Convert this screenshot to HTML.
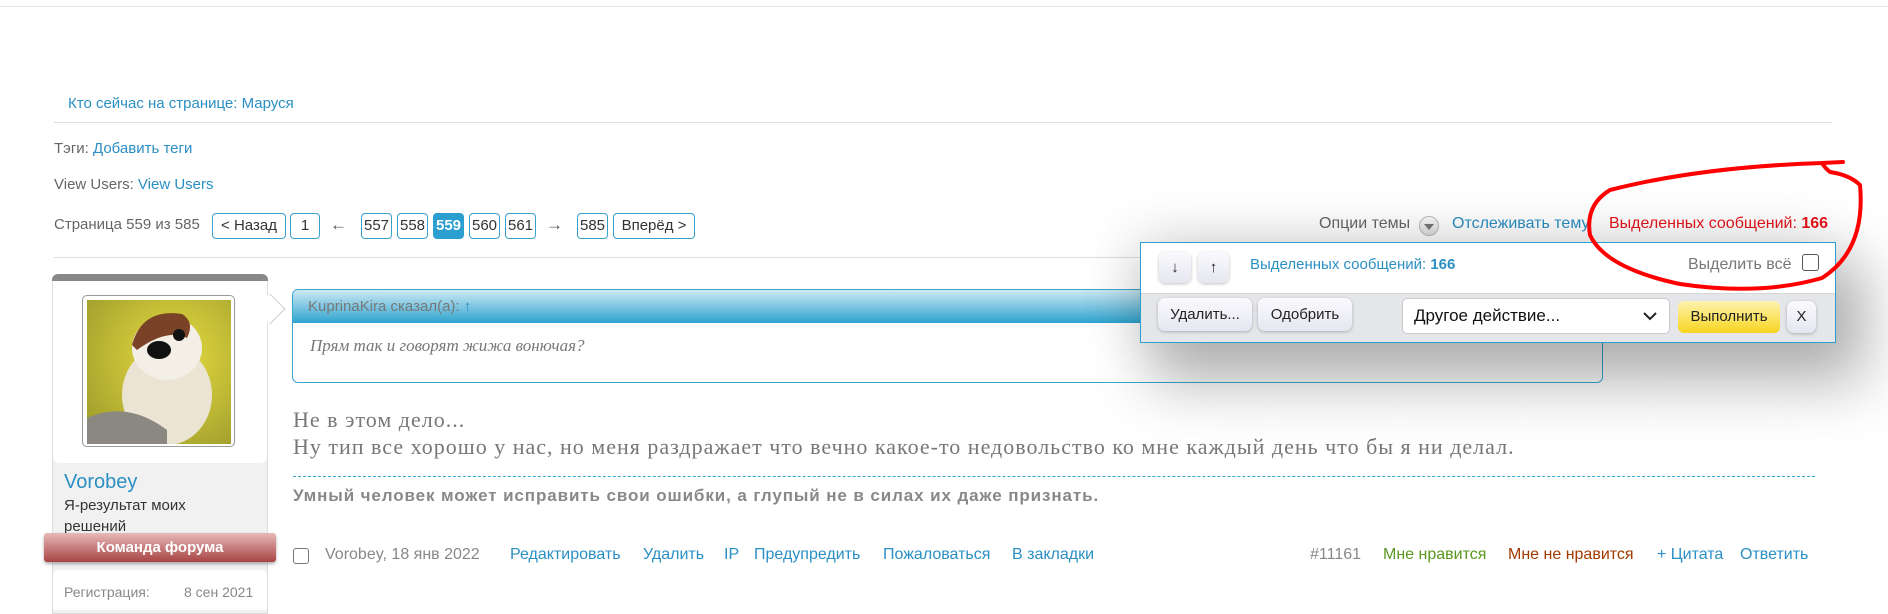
<!DOCTYPE html>
<html><head><meta charset="utf-8"><style>
*{margin:0;padding:0;box-sizing:border-box}
body{width:1888px;height:607px;overflow:hidden;background:#fff;font-family:"Liberation Sans","DejaVu Sans",sans-serif;font-size:15px;color:#666;position:relative}
.a{position:absolute;white-space:nowrap}
.b{color:#2a8fc3}
.hr{position:absolute;height:1px;background:#ddd}
.pb{position:absolute;top:213px;height:26px;border:1px solid #3a9fcc;border-radius:4px;background:#fff;color:#333;font-size:15px;line-height:24px;text-align:center}
.btn{position:absolute;border-radius:7px;background:linear-gradient(#fafafe,#e6e6f0);box-shadow:0 1px 3px rgba(0,0,0,.25);color:#222;text-align:center;font-size:15px}
.f{font-size:16px;top:546px}
</style></head><body>
<div class="hr" style="left:0;top:6px;width:1888px;background:#e2e2e2"></div>
<div class="a b" style="left:68px;top:95px">Кто сейчас на странице: Маруся</div>
<div class="hr" style="left:54px;top:122px;width:1778px"></div>
<div class="a" style="left:54px;top:140px">Тэги: <span class="b">Добавить теги</span></div>
<div class="a" style="left:54px;top:176px">View Users: <span class="b">View Users</span></div>
<div class="a" style="left:54px;top:216px">Страница 559 из 585</div>
<div class="pb" style="left:212px;width:74px">&lt; Назад</div>
<div class="pb" style="left:290px;width:30px">1</div>
<div class="a" style="left:330px;top:215px;color:#555;font-size:17px">←</div>
<div class="pb" style="left:361px;width:31px">557</div>
<div class="pb" style="left:397px;width:31px">558</div>
<div class="pb" style="left:433px;width:31px;background:#2a9fd0;border-color:#2a9fd0;color:#fff;font-weight:bold">559</div>
<div class="pb" style="left:469px;width:31px">560</div>
<div class="pb" style="left:505px;width:31px">561</div>
<div class="a" style="left:546px;top:215px;color:#555;font-size:17px">→</div>
<div class="pb" style="left:577px;width:31px">585</div>
<div class="pb" style="left:613px;width:82px">Вперёд &gt;</div>
<div class="a" style="left:1319px;top:215px;color:#666;font-size:16px">Опции темы</div>
<div class="a" style="left:1419px;top:216px;width:20px;height:20px;border-radius:50%;border:1px solid #bbb;background:linear-gradient(#fafafa,#ddd)"><div style="position:absolute;left:4px;top:7px;border-left:5px solid transparent;border-right:5px solid transparent;border-top:6px solid #777"></div></div>
<div class="a b" style="left:1452px;top:215px;font-size:16px">Отслеживать тему</div>
<div class="a" style="left:1609px;top:215px;color:#e8141a;font-size:16px">Выделенных сообщений: <b>166</b></div>
<div class="hr" style="left:54px;top:257px;width:1778px"></div>

<!-- postbit -->
<div class="a" style="left:52px;top:274px;width:216px;height:340px;border:1px solid #ddd;border-top:0;background:#f1f1f1;border-radius:6px 6px 0 0"></div>
<div class="a" style="left:52px;top:274px;width:216px;height:7px;background:#888;border-radius:6px 6px 0 0"></div>
<div class="a" style="left:53px;top:281px;width:214px;height:182px;background:#fff;border-radius:0 0 6px 6px"></div>
<div class="a" style="left:259px;top:298px;width:22px;height:22px;background:#fff;border-right:1px solid #ccc;border-top:1px solid #ccc;transform:rotate(45deg)"></div>
<div class="a" style="left:82px;top:295px;width:153px;height:152px;border:1px solid #999;border-radius:5px;background:#fff"></div>
<svg class="a" style="left:87px;top:300px" width="144" height="144" viewBox="0 0 144 144">
<defs><radialGradient id="g" cx="0.6" cy="0.4" r="0.8"><stop offset="0" stop-color="#e8dd40"/><stop offset="1" stop-color="#9c9a2c"/></radialGradient></defs>
<rect width="144" height="144" fill="url(#g)"/>
<ellipse cx="80" cy="95" rx="45" ry="50" fill="#ece4d2"/>
<ellipse cx="80" cy="48" rx="35" ry="32" fill="#f3efe6"/>
<path d="M45 45 Q55 8 95 14 Q108 22 100 38 Q80 28 50 50Z" fill="#7a4226"/>
<ellipse cx="72" cy="50" rx="12" ry="9" fill="#111"/>
<circle cx="92" cy="35" r="6" fill="#111"/>
<path d="M0 118 Q40 100 80 130 L80 144 L0 144Z" fill="#8a8880"/>
</svg>
<div class="a b" style="left:64px;top:471px;font-size:20px">Vorobey</div>
<div class="a" style="left:64px;top:495px;color:#333;font-size:15px;line-height:21px;white-space:normal;width:190px">Я-результат моих<br>решений</div>
<div class="a" style="left:44px;top:533px;width:232px;height:29px;border-radius:3px;background:linear-gradient(#e7b9b9,#a84444);box-shadow:0 2px 3px rgba(0,0,0,.3);color:#fff;font-weight:bold;text-align:center;line-height:29px;font-size:15px">Команда форума</div>
<div class="a" style="left:53px;top:570px;width:214px;height:40px;background:#fff;border-radius:5px 5px 0 0"></div>
<div class="a" style="left:64px;top:584px;font-size:14px;color:#888">Регистрация:</div>
<div class="a" style="left:184px;top:584px;font-size:14px;color:#888">8 сен 2021</div>

<!-- quote -->
<div class="a" style="left:292px;top:289px;width:1311px;height:94px;border:1px solid #3aa6d0;border-radius:6px;overflow:hidden">
<div style="height:33px;background:linear-gradient(#cde9f3,#2ea3cf);color:#777;padding:8px 0 0 15px;font-size:15px">KuprinaKira сказал(а): <span class="b">↑</span></div>
<div style="padding:13px 0 0 17px;font-family:'Liberation Serif',serif;font-style:italic;color:#777;font-size:17px">Прям так и говорят жижа вонючая?</div>
</div>
<div class="a" style="left:293px;top:406px;font-family:'Liberation Serif',serif;font-size:22px;letter-spacing:1px;color:#777;line-height:27px">Не в этом дело...<br>Ну тип все хорошо у нас, но меня раздражает что вечно какое-то недовольство ко мне каждый день что бы я ни делал.</div>
<div class="a" style="left:293px;top:476px;width:1522px;border-top:1px dashed #3aa6d0"></div>
<div class="a" style="left:293px;top:486px;font-weight:bold;color:#888;font-size:17px;letter-spacing:0.9px">Умный человек может исправить свои ошибки, а глупый не в силах их даже признать.</div>
<div class="a" style="left:293px;top:548px;width:16px;height:16px;border:1px solid #777;border-radius:3px"></div>
<div class="a f" style="left:325px;color:#888">Vorobey, 18 янв 2022</div>
<div class="a b f" style="left:510px">Редактировать</div>
<div class="a b f" style="left:643px">Удалить</div>
<div class="a b f" style="left:724px">IP</div>
<div class="a b f" style="left:754px">Предупредить</div>
<div class="a b f" style="left:883px">Пожаловаться</div>
<div class="a b f" style="left:1012px">В закладки</div>
<div class="a f" style="left:1310px;color:#888">#11161</div>
<div class="a f" style="left:1383px;color:#5a9620">Мне нравится</div>
<div class="a f" style="left:1508px;color:#a03a00">Мне не нравится</div>
<div class="a b f" style="left:1657px">+ Цитата</div>
<div class="a b f" style="left:1740px">Ответить</div>

<!-- floating panel -->
<div class="a" style="left:1140px;top:242px;width:696px;height:101px;border:1px solid #2a9fd0;background:#e4e6ea;box-shadow:20px 30px 60px 10px rgba(0,0,0,.3),-10px -10px 60px rgba(0,0,0,.08)">
<div style="height:51px;background:#fff;border-bottom:1px solid #d4d6da"></div>
</div>
<div class="btn" style="left:1159px;top:252px;width:32px;height:31px;line-height:31px">↓</div>
<div class="btn" style="left:1198px;top:252px;width:31px;height:31px;line-height:31px">↑</div>
<div class="a b" style="left:1250px;top:256px;font-size:15px">Выделенных сообщений: <b>166</b></div>
<div class="a" style="left:1688px;top:256px;color:#777;font-size:16px">Выделить всё</div>
<div class="a" style="left:1802px;top:254px;width:17px;height:17px;border:1px solid #555;border-radius:3px;background:#fff"></div>
<div class="btn" style="left:1158px;top:298px;width:94px;height:33px;line-height:33px">Удалить...</div>
<div class="btn" style="left:1258px;top:298px;width:94px;height:33px;line-height:33px">Одобрить</div>
<div class="a" style="left:1402px;top:298px;width:268px;height:36px;background:#fff;border:1px solid #ccc;border-radius:5px;color:#111;font-size:17px;line-height:34px;padding-left:11px">Другое действие...<svg style="position:absolute;right:12px;top:13px" width="14" height="9"><path d="M1 1 L7 7 L13 1" stroke="#222" stroke-width="2" fill="none"/></svg></div>
<div class="a" style="left:1678px;top:301px;width:102px;height:32px;border-radius:6px;background:linear-gradient(#fff3b0,#f7d520);color:#222;text-align:center;line-height:32px;font-size:15px">Выполнить</div>
<div class="btn" style="left:1787px;top:301px;width:29px;height:32px;line-height:32px">X</div>

<svg class="a" style="left:0;top:0" width="1888" height="607"><path d="M1843 162 L1822 163 Q1700 167 1610 190 Q1585 205 1590 235 Q1605 268 1680 284 Q1760 296 1822 278 Q1866 250 1860 185 Q1850 175 1830 172 Q1825 168 1822 163" stroke="#f00" stroke-width="4" fill="none" stroke-linecap="round"/></svg>
</body></html>
